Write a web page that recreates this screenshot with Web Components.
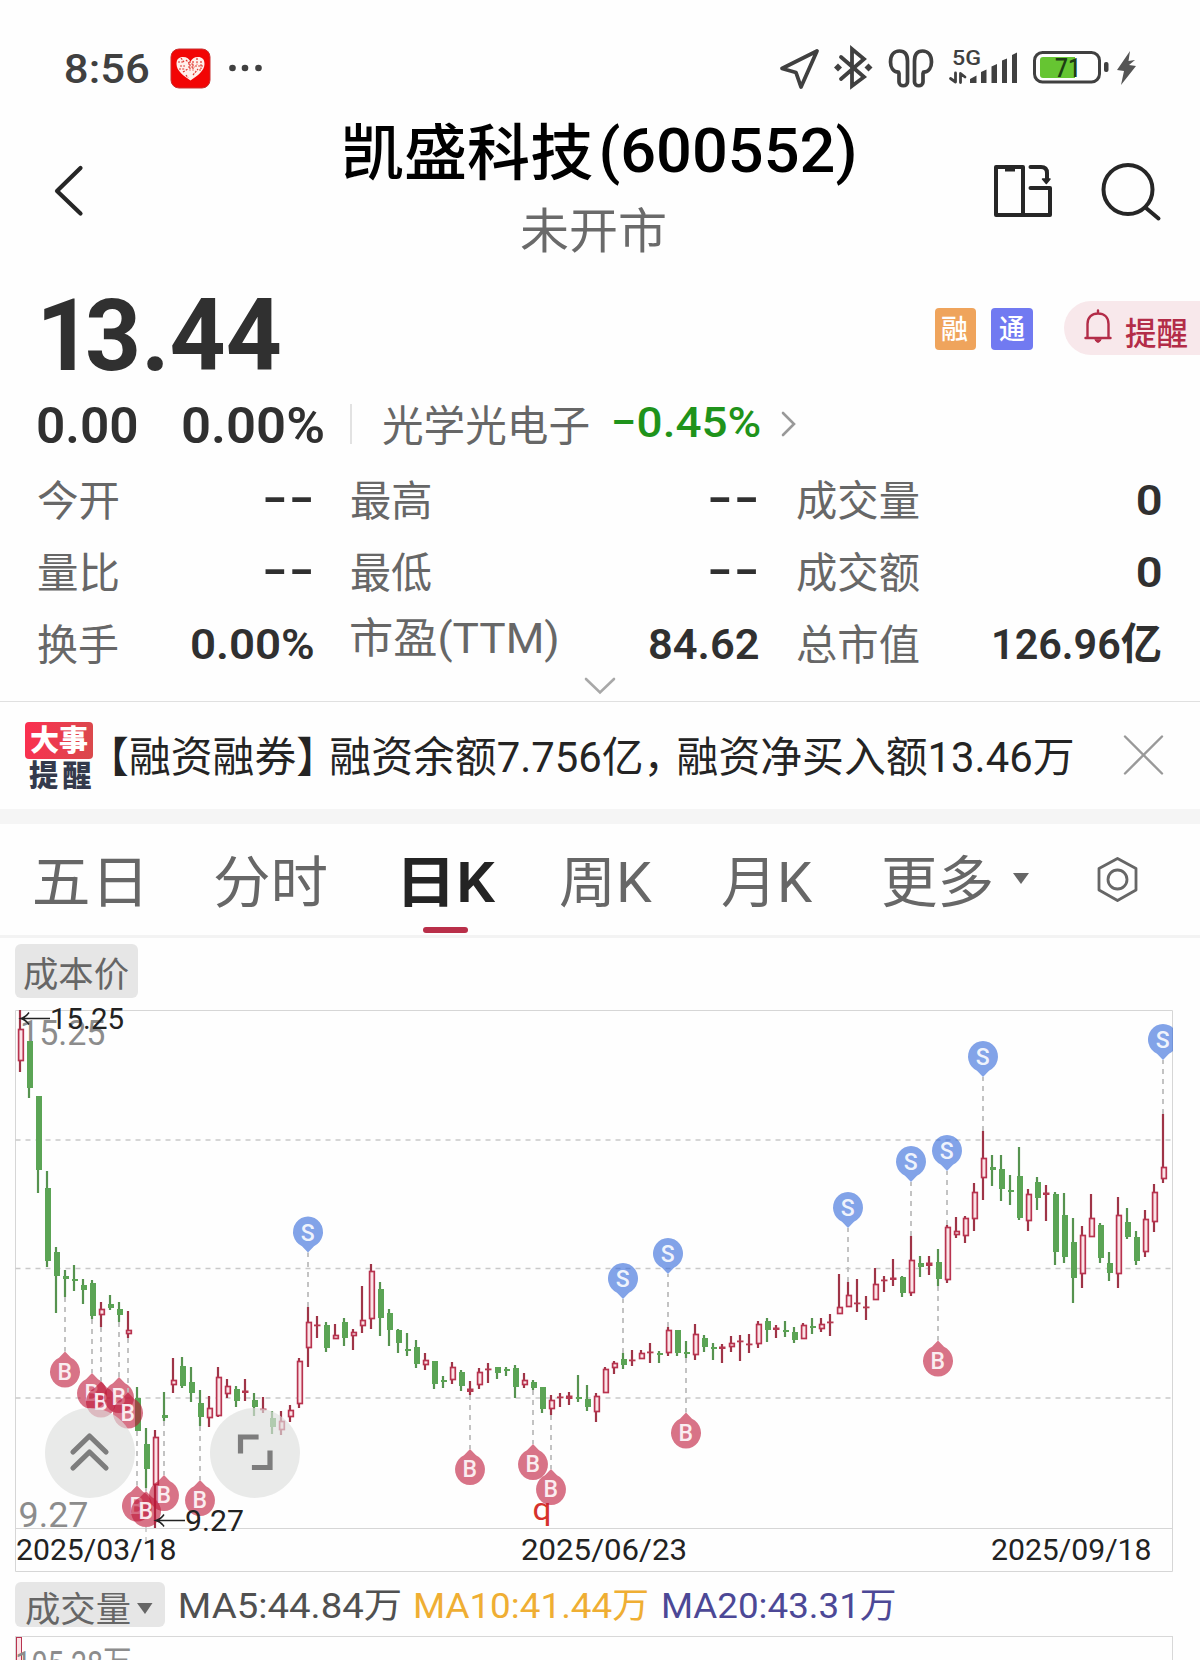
<!DOCTYPE html>
<html lang="zh-CN">
<head>
<meta charset="utf-8">
<title>凯盛科技(600552)</title>
<style>
  html, body { margin: 0; padding: 0; }
  body {
    width: 1200px;
    height: 1660px;
    overflow: hidden;
    background: #fefefe;
    font-family: Roboto, "Noto Sans CJK SC", sans-serif;
  }
</style>
</head>
<body>
<stock-page></stock-page>

<script>
const FONT = 'Roboto, "Noto Sans CJK SC", sans-serif';

function define(name, html, setup) {
  const template = document.createElement('template');
  template.innerHTML = html;
  customElements.define(name, class extends HTMLElement {
    constructor() {
      super();
      this.attachShadow({ mode: 'open' });
      this.shadowRoot.appendChild(template.content.cloneNode(true));
      if (setup) setup(this.shadowRoot, this);
    }
  });
}

// Custom Element: <ink-text>
// One line of text whose visible glyphs fill exactly `w` pixels.
class InkText extends HTMLElement {
  constructor() {
    super();
    this.attachShadow({ mode: 'open' });
    this.shadowRoot.innerHTML = `
      <style>
        :host { display: block; flex: none; white-space: nowrap; line-height: 1; }
        span { display: inline-block; transform-origin: 0 50%; vertical-align: top; }
      </style>
      <span><slot></slot></span>
    `;
  }

  connectedCallback() {
    const size = Number(this.getAttribute('size'));
    const weight = this.getAttribute('weight') || '400';
    const width = Number(this.getAttribute('w'));
    const span = this.shadowRoot.querySelector('span');
    this.style.fontSize = size + 'px';
    this.style.height = size + 'px';
    this.style.fontWeight = weight;
    this.style.width = width + 'px';
    const ctx = document.createElement('canvas').getContext('2d');
    ctx.font = `${weight} ${size}px ${FONT}`;
    const m = ctx.measureText(this.textContent);
    const left = -m.actualBoundingBoxLeft;
    const right = m.width - m.actualBoundingBoxRight;
    const scale = width / (span.getBoundingClientRect().width - left - right);
    span.style.transform = `translateX(${-left * scale}px) scaleX(${scale})`;
  }
}
customElements.define('ink-text', InkText);

// Custom Element: <status-bar>
define('status-bar', `
  <style>
    :host { display: flex; height: 104px; box-sizing: border-box; color: #404040; align-items: flex-start; padding-left: 66px; }
    .time { margin-top: 49.5px; }
    .app { margin: 48px 0 0 21px; }
    .icons { margin: 40px 0 0 auto; }
    svg { display: block; }
  </style>
  <ink-text class="time" w="83" size="40" weight="500">8:56</ink-text>
  <svg class="app" width="100" height="42" viewBox="170 48 100 42">
    <rect x="171" y="49" width="39" height="39" rx="8" fill="#f20505" stroke="#c93030"/>
    <path d="M190.500 80.500C184 76 176.500 71 176.500 64C176.500 59 179 57 183 57C187 57 189 59 190.500 61.500C192 59 194 57 198 57C202 57 204.500 59 204.500 64C204.500 71 197 76 190.500 80.500Z" fill="#fff0ec"/>
    <path d="M178 62h6M180 66h5M188 64h6M188 67h7M190 61v10M193 61v10M197 58v7M201 61v8M183 72l5-3M193 75l5-6M181 58l3 4M186 75l2 3M199 70h3M179 69h6M195 66h8M186 60l3 3" stroke="#e0362f" stroke-width="1.200" stroke-dasharray="2 1.200"/>
    <g fill="#404040"><circle cx="232.500" cy="68" r="3.300"/><circle cx="245" cy="68" r="3.300"/><circle cx="258.500" cy="68" r="3.300"/></g>
  </svg>
  <svg class="icons" width="430" height="60" viewBox="770 40 430 60" fill="none" stroke="#404040" stroke-linejoin="round" stroke-linecap="round">
    <path d="M817 51L782 68.500L796 72.500L801 87Z" stroke-width="3.800"/>
    <path d="M841 57L864 77L852 86V49L864 59L841 79" stroke-width="3.800" stroke-linejoin="miter"/>
    <g fill="#404040" stroke="none"><path d="M838 63.500l4 4-4 4-4-4zM868.500 63.500l4 4-4 4-4-4z"/></g>
    <path d="M898.500 72C893 72 890.500 67 890.500 62C890.500 55 894 51 899.500 51C905 51 907.500 54 907.500 61V82C907.500 87 899 87 899 82V73.500ZM923.500 72C929 72 931.500 67 931.500 62C931.500 55 928 51 922.500 51C917 51 914.500 54 914.500 61V82C914.500 87 923 87 923 82V73.500Z" stroke-width="3.700"/>
    <text x="952" y="65" font-size="20" font-weight="500" fill="#404040" stroke="none" font-family="Roboto" textLength="29" lengthAdjust="spacingAndGlyphs">5G</text>
    <path d="M955.500 73V82L950.500 78.500M960.500 82.500V73.500L965 77" stroke-width="2.800"/>
    <g fill="#404040" stroke="none">
      <path d="M970 83V79L976.500 75.500V83ZM981 83V72L986.500 69.500V83ZM991.500 83V66.500L997 64V83ZM1002 83V60.500L1007 58.500V83ZM1012 83V55L1017 52.500V83Z"/>
      <rect x="1104" y="62" width="4.500" height="10" rx="2"/>
      <path d="M1130 51L1117 70L1124 71L1121 85L1136 66L1129 65L1135 60L1128.500 61Z" fill="#555"/>
    </g>
    <rect x="1034.500" y="52.500" width="65" height="29.500" rx="8" stroke-width="3"/>
    <path d="M1043 57H1075V78H1043Q1040 78 1040 75V60Q1040 57 1043 57Z" fill="#66c532" stroke="none"/>
    <text x="1055" y="77" font-size="25" font-weight="500" fill="#1d3d14" stroke="none" font-family="Roboto" textLength="26" lengthAdjust="spacingAndGlyphs">71</text>
  </svg>
`);

// Custom Element: <stock-header>
define('stock-header', `
  <style>
    :host { display: flex; height: 166px; align-items: flex-start; }
    svg { display: block; flex: none; }
    .back { margin: 60px 0 0 50px; }
    .names { margin: 17px 0 0 255px; width: 509px; }
    .names ink-text + ink-text { margin: 26px 0 0 175.500px; color: #6a6a6a; }
    .cn { vertical-align: -3px; margin-right: 5px; }
    .tools { margin: 56px 0 0 131px; }
  </style>
  <svg class="back" width="40" height="56" viewBox="50 164 40 56" fill="none" stroke="#262626" stroke-width="4.200" stroke-linecap="round" stroke-linejoin="round">
    <path d="M80.500 168L57 191L80.500 213.500"/>
  </svg>
  <div class="names">
    <ink-text w="509" size="61" weight="500"><span class="cn">凯盛科技</span>(600552)</ink-text>
    <ink-text w="144" size="48">未开市</ink-text>
  </div>
  <svg class="tools" width="180" height="64" viewBox="985 160 180 64" fill="none" stroke="#262626" stroke-width="4" stroke-linecap="round" stroke-linejoin="round">
    <path d="M996 167H1023V215H996ZM1023 215H1050V188H1030.500M1030.500 167H1041Q1047 167 1047 173V179"/>
    <path d="M1005 169H1015" stroke-width="5" stroke-linecap="butt"/>
    <path d="M1042.500 179H1050L1046.300 183.500Z" fill="#262626" stroke-width="1.500"/>
    <circle cx="1128" cy="189.500" r="24.500"/>
    <path d="M1146 208L1158.500 218.500"/>
  </svg>
`);

// Custom Element: <quote-cell>
define('quote-cell', `
  <style>
    :host { display: flex; justify-content: space-between; align-items: flex-start; color: #303030; }
    ::slotted([slot=label]) { color: #676767; margin-top: 2px; }
  </style>
  <slot name="label"></slot><slot></slot>
`);

// Custom Element: <quote-panel>
define('quote-panel', `
  <style>
    :host { display: block; height: 431px; box-sizing: border-box; padding-top: 15px; color: #303030; overflow: hidden; }
    svg { display: block; flex: none; }
    .row { display: flex; align-items: flex-start; }
    .price { height: 101px; padding-left: 43.500px; }
    .one { letter-spacing: -.075em; }
    .tag { width: 42px; height: 42px; border-radius: 4px; margin-top: 23px; display: flex; justify-content: center; align-items: center; color: #fff; }
    .tag ink-text { margin-top: 2px; }
    .rong { background: #efa45c; margin-left: 655px; }
    .tong { background: #717af1; margin-left: 15px; }
    .remind { margin: 16px 0 0 31px; width: 136px; height: 54px; border-radius: 27px 0 0 27px; background: #f8e8eb; display: flex; color: #b32c48; }
    .remind svg { margin: 7px 0 0 19px; }
    .remind ink-text { margin: 17px 0 0 12px; }
    .change { height: 50px; margin-top: 15px; padding-left: 38px; }
    .bar { width: 2px; height: 40px; margin: 3px 0 0 27px; background: #e2e2e2; }
    .sector { margin: 5px 0 0 30.500px; color: #676767; }
    .down { margin: 0 0 0 25.500px; color: #1f931b; }
    .arrow { margin: 9px 0 0 19px; }
    .grid { display: grid; margin-top: 28px; padding-left: 37.500px; grid-template-columns: 275px 407px 364px; column-gap: 38.500px; grid-template-rows: 72px 72px 54px; }
    .dash { margin: -2px 1px 0 0; }
    .more { margin: 0 auto; }
  </style>
  <div class="row price">
    <ink-text w="236" size="101" weight="700"><span class="one">1</span>3.44</ink-text>
    <div class="tag rong"><ink-text w="26" size="27" weight="500">融</ink-text></div>
    <div class="tag tong"><ink-text w="26" size="27" weight="500">通</ink-text></div>
    <div class="remind">
      <svg width="30" height="38" viewBox="0 0 30 38" fill="none" stroke="#b32c48" stroke-width="2.400" stroke-linecap="round">
        <path d="M15 2.500V5M4.500 30V16C4.500 9 9 5.500 15 5.500S25.500 9 25.500 16V30M2.500 30H27.500"/>
        <path d="M12 32Q15 37 18 32Z" fill="#b32c48" stroke-width="1"/>
      </svg>
      <ink-text w="62" size="32" weight="500">提醒</ink-text>
    </div>
  </div>
  <div class="row change">
    <ink-text w="99" size="50" weight="600">0.00</ink-text>
    <ink-text style="margin-left:46px" w="140" size="50" weight="600">0.00%</ink-text>
    <div class="bar"></div>
    <ink-text class="sector" w="206" size="42">光学光电子</ink-text>
    <ink-text class="down" w="145.500" size="43" weight="500">−0.45%</ink-text>
    <svg class="arrow" width="18" height="28" viewBox="0 0 18 28" fill="none" stroke="#999" stroke-width="2.600" stroke-linecap="round"><path d="M4 3L15 14L4 25"/></svg>
  </div>
  <div class="grid">
    <quote-cell><ink-text slot="label" w="80" size="42">今开</ink-text><ink-text class="dash" w="47" size="43" weight="700">--</ink-text></quote-cell>
    <quote-cell><ink-text slot="label" w="79.500" size="42">最高</ink-text><ink-text class="dash" w="47" size="43" weight="700">--</ink-text></quote-cell>
    <quote-cell><ink-text slot="label" w="122" size="42">成交量</ink-text><ink-text w="23" size="43" weight="600">0</ink-text></quote-cell>
    <quote-cell><ink-text slot="label" w="80" size="42">量比</ink-text><ink-text class="dash" w="47" size="43" weight="700">--</ink-text></quote-cell>
    <quote-cell><ink-text slot="label" w="80" size="42">最低</ink-text><ink-text class="dash" w="47" size="43" weight="700">--</ink-text></quote-cell>
    <quote-cell><ink-text slot="label" w="122" size="42">成交额</ink-text><ink-text w="23" size="43" weight="600">0</ink-text></quote-cell>
    <quote-cell><ink-text slot="label" w="80" size="42">换手</ink-text><ink-text w="121" size="43" weight="600">0.00%</ink-text></quote-cell>
    <quote-cell><ink-text slot="label" style="margin-top:-5px" w="206" size="42">市盈(TTM)</ink-text><ink-text w="108" size="43" weight="600">84.62</ink-text></quote-cell>
    <quote-cell><ink-text slot="label" w="122" size="42">总市值</ink-text><ink-text w="167" size="43" weight="600">126.96亿</ink-text></quote-cell>
  </div>
  <svg class="more" width="36" height="20" viewBox="0 0 36 20" fill="none" stroke="#a8a8a8" stroke-width="2.600" stroke-linecap="round"><path d="M4 2L18 15.500L32 2"/></svg>
`);

// Custom Element: <news-bar>
define('news-bar', `
  <style>
    :host { display: flex; align-items: flex-start; height: 123px; box-sizing: border-box; border-top: 1px solid #e0e0e0; border-bottom: 15px solid #f5f5f5; color: #242424; }
    .logo { margin: 20px 0 0 25px; width: 68px; }
    .hot { height: 37px; border-radius: 4px; background: linear-gradient(100deg, #fb2f50, #d94a4c); color: #fff; display: flex; justify-content: center; align-items: center; }
    .hot ink-text { margin-top: 1px; }
    .logo > ink-text { margin: 2px 0 0 3.500px; color: #343a4c; }
    .text { margin: 35px 0 0 20.500px; }
    i { font-style: normal; letter-spacing: -.21em; }
    b { font-weight: inherit; letter-spacing: .14em; }
    svg { display: block; margin: 32px 0 0 50px; }
  </style>
  <div class="logo">
    <div class="hot"><ink-text w="58" size="29" weight="900">大事</ink-text></div>
    <ink-text w="62.500" size="30" weight="900"><b>提</b>醒</ink-text>
  </div>
  <ink-text class="text" w="958.500" size="42">【融资融券<i>】</i>融资余额7.756亿<i>，</i>融资净买入额13.46万</ink-text>
  <svg width="44" height="42" viewBox="0 0 44 42" stroke="#999" stroke-width="2.400" stroke-linecap="round"><path d="M3 2.500L40 39.500M40 2.500L3 39.500"/></svg>
`);

// Custom Element: <period-tabs>
define('period-tabs', `
  <style>
    :host { display: flex; align-items: flex-start; height: 114px; box-sizing: border-box; padding: 31px 0 0 34.500px; border-bottom: 3px solid #f3f3f3; color: #676767; }
    .on { color: #242424; width: 91px; }
    .on::after { content: ""; display: block; width: 45px; height: 6px; margin: 16px 0 0 19.500px; border-radius: 3px; background: #b92f49; }
    svg { display: block; }
  </style>
  <ink-text w="105" size="56">五日</ink-text>
  <ink-text style="margin-left:75px" w="111" size="56">分时</ink-text>
  <div class="on" style="margin-left:78px"><ink-text w="91.500" size="56" weight="600">日K</ink-text></div>
  <ink-text style="margin-left:65px" w="92.500" size="56">周K</ink-text>
  <ink-text style="margin-left:70px" w="91" size="56">月K</ink-text>
  <ink-text style="margin-left:69.500px" w="108" size="56">更多</ink-text>
  <svg style="margin:18px 0 0 22px" width="16" height="11" viewBox="0 0 16 11"><path d="M0 0H16L8 11Z" fill="#666"/></svg>
  <svg style="margin:0 0 0 67px" width="44" height="48" viewBox="1096 855 44 48" fill="none" stroke="#666" stroke-width="2.800" stroke-linejoin="round"><path d="M1117.500 858.500L1136 868.500V890L1117.500 900.500L1099 890V868.500Z"/><circle cx="1117.500" cy="879.500" r="9.500"/></svg>
`);

// Each candle: kind (1 = up, 0 = down), high, body top, body bottom, low
const CANDLES = [
  [1,1010,1029,1061,1072],[0,1041,1041,1088,1098],[0,1096,1096,1170,1193],[0,1171,1188,1261,1267],
  [0,1247,1252,1276,1313],[0,1270,1276,1279,1297],[0,1265,1279,1281,1291],[0,1279,1285,1290,1304],
  [0,1280,1283,1316,1319],[1,1302,1309,1315,1327],[0,1295,1304,1308,1310],[0,1302,1309,1315,1322],
  [1,1311,1330,1334,1338],[0,1387,1398,1431,1431],[0,1428,1444,1469,1488],[1,1430,1437,1485,1528],
  [0,1392,1415,1418,1421],[1,1358,1380,1385,1393],[0,1357,1366,1386,1388],[0,1367,1382,1393,1402],
  [0,1390,1403,1417,1426],[1,1396,1408,1418,1427],[1,1367,1377,1416,1417],[1,1379,1386,1394,1398],
  [0,1386,1389,1401,1407],[1,1379,1391,1393,1401],[0,1393,1400,1407,1416],[1,1397,1409,1410,1413],
  [0,1411,1418,1427,1434],[1,1411,1421,1430,1435],[1,1405,1410,1417,1422],[1,1358,1361,1404,1408],
  [1,1307,1322,1348,1367],[1,1316,1325,1326,1338],[0,1322,1325,1348,1352],[1,1324,1335,1339,1339],
  [0,1318,1322,1338,1346],[1,1329,1332,1336,1350],[1,1286,1320,1326,1333],[1,1264,1271,1319,1329],
  [0,1282,1289,1318,1336],[0,1309,1313,1330,1346],[0,1329,1330,1343,1353],[0,1333,1349,1351,1356],
  [0,1340,1347,1364,1368],[1,1353,1360,1365,1370],[0,1361,1361,1384,1389],[0,1376,1380,1382,1388],
  [1,1362,1367,1380,1384],[0,1370,1372,1386,1391],[1,1381,1389,1392,1395],[1,1368,1372,1385,1389],
  [1,1363,1369,1370,1383],[0,1367,1367,1373,1379],[0,1367,1369,1371,1376],[0,1365,1368,1387,1398],
  [1,1373,1380,1385,1388],[0,1380,1382,1388,1390],[0,1387,1387,1409,1413],[1,1395,1400,1409,1415],
  [1,1393,1397,1398,1407],[1,1392,1396,1399,1405],[0,1375,1397,1399,1402],[0,1385,1399,1407,1411],
  [1,1393,1396,1412,1422],[1,1367,1369,1393,1393],[1,1361,1363,1368,1374],[0,1353,1359,1365,1369],
  [1,1350,1360,1361,1366],[1,1350,1353,1359,1359],[1,1343,1352,1353,1363],[0,1351,1353,1354,1363],
  [1,1327,1330,1353,1356],[0,1330,1330,1353,1356],[0,1341,1352,1354,1358],[1,1324,1334,1355,1360],
  [0,1335,1338,1347,1352],[0,1343,1347,1349,1360],[1,1344,1347,1349,1363],[1,1336,1343,1347,1352],
  [1,1335,1341,1342,1361],[1,1334,1344,1345,1353],[1,1321,1324,1344,1348],[0,1318,1321,1330,1342],
  [1,1325,1328,1330,1338],[0,1321,1330,1331,1337],[0,1327,1332,1340,1343],[1,1323,1325,1339,1339],
  [0,1318,1326,1328,1334],[1,1318,1324,1329,1332],[1,1314,1322,1323,1336],[1,1274,1307,1314,1314],
  [1,1282,1295,1307,1307],[1,1279,1303,1304,1312],[1,1296,1307,1308,1320],[1,1268,1284,1300,1300],
  [1,1276,1280,1281,1292],[1,1259,1278,1280,1286],[0,1276,1277,1293,1297],[1,1236,1260,1293,1296],
  [0,1256,1263,1267,1277],[1,1256,1263,1266,1275],[0,1249,1262,1279,1286],[1,1225,1227,1280,1283],
  [1,1217,1231,1235,1238],[1,1216,1218,1236,1243],[1,1183,1192,1219,1231],[1,1131,1158,1178,1200],
  [0,1155,1167,1170,1186],[0,1155,1169,1189,1201],[0,1175,1190,1192,1205],[0,1147,1176,1218,1220],
  [1,1189,1194,1221,1231],[0,1177,1182,1198,1210],[1,1185,1193,1195,1221],[0,1192,1194,1252,1265],
  [0,1193,1215,1257,1263],[0,1218,1242,1278,1303],[1,1226,1235,1274,1288],[1,1194,1218,1237,1237],
  [0,1223,1225,1258,1263],[0,1252,1263,1273,1281],[1,1197,1215,1274,1288],[0,1208,1222,1237,1239],
  [0,1231,1237,1261,1265],[1,1210,1219,1252,1257],[1,1184,1192,1222,1232],[1,1114,1167,1179,1183]
];

// Trade marks: candle index, centre of the bubble
const SELLS = [[32,1232.5],[67,1279],[72,1254],[92,1208],[99,1162],[103,1151],[107,1057],[127,1040]];
const BUYS = [[5,1371.5],[8,1393],[9,1401.5],[11,1397],[12,1412.5],[13,1505.5],[14,1511],[16,1495],[20,1500],[50,1469],[57,1464],[59,1489],[74,1432.5],[102,1360.5]];

function candleX(i) {
  return 20 + 9 * i;
}

function drawCandle([up, high, top, bottom, low], i) {
  const x = candleX(i);
  if (!up) {
    return `<path d="M${x} ${high}V${low}" stroke="#56934f" stroke-width="2.200"/>
      <rect x="${x - 2}" y="${top}" width="6" height="${Math.max(2, bottom - top)}" fill="#5ba455"/>`;
  }
  const wick = `<path d="M${x} ${high}V${top}M${x} ${bottom}V${low}" stroke="#9f3447" stroke-width="2.200"/>`;
  if (bottom - top < 4) {
    return wick + `<rect x="${x - 3}" y="${top - .5}" width="6.5" height="${Math.max(1.8, bottom - top + .5)}" fill="#b53850"/>`;
  }
  return wick + `<rect x="${x - 1.4}" y="${top + .5}" width="4.700" height="${bottom - top - 1}" fill="#fbe3e7" stroke="#b8334f" stroke-width="1.700"/>`;
}

function drawMark(letter, i, cy) {
  const x = candleX(i);
  const sell = letter === 'S';
  const dir = sell ? 1 : -1;
  const tip = cy + 20 * dir;
  const end = sell ? CANDLES[i][1] : CANDLES[i][4];
  return `<path d="M${x} ${end}V${tip}" stroke="#bdbdbd" stroke-width="1.800" stroke-dasharray="5 5"/>
    <path d="M${x - 6} ${cy + 13.75 * dir}A15 15.500 0 1 ${sell ? 1 : 0} ${x + 6} ${cy + 13.75 * dir}L${x} ${tip}Z" fill="${sell ? 'rgba(47,102,217,.6)' : 'rgba(190,22,55,.6)'}"/>
    <text x="${x - .3}" y="${cy + 8}" font-size="23" font-weight="500" text-anchor="middle" fill="#fff" fill-opacity=".88">${letter}</text>`;
}

// Custom Element: <k-chart>
define('k-chart', `
  <style>
    :host { display: flow-root; height: 636px; }
    .chip { display: flex; width: 123px; height: 54px; margin: 6px 0 0 15px; border-radius: 6px; background: #e6e6e6; color: #666; }
    .chip ink-text { margin: 13.500px 0 0 9px; }
    svg { display: block; margin-top: 2px; }
  </style>
  <div class="chip"><ink-text w="104" size="35">成本价</ink-text></div>
  <svg width="1200" height="574" viewBox="0 1000 1200 574" font-family="Roboto">
    <defs><clipPath id="plot"><rect x="15" y="1000" width="1158" height="574"/></clipPath></defs>
    <g fill="none" stroke="#d6d6d6" stroke-width="1">
      <path d="M15.500 1010.500H1172.500V1571.500H15.500ZM15.500 1528.500H1172.500"/>
      <path d="M15.500 1140H1172M15.500 1268.500H1172M15.500 1398H1172" stroke="#c9c9c9" stroke-width="1.600" stroke-dasharray="5 5"/>
      <path d="M146 1527V1541" stroke="#c9c9c9" stroke-width="1.600" stroke-dasharray="5 5"/>
    </g>
    <g fill="#8c8c8c" font-size="35">
      <text x="20" y="1044.500" textLength="85.500" lengthAdjust="spacingAndGlyphs">15.25</text>
      <text x="18.500" y="1526.500" textLength="70" lengthAdjust="spacingAndGlyphs">9.27</text>
    </g>
    <text x="532.500" y="1520" font-size="31" fill="#d6322c" textLength="19" lengthAdjust="spacingAndGlyphs">q</text>
    <g id="candles" clip-path="url(#plot)"></g>
    <g fill="#222" font-size="30">
      <text x="50" y="1029" textLength="74" lengthAdjust="spacingAndGlyphs" font-size="29.500">15.25</text>
      <text x="185" y="1530.500" textLength="59" lengthAdjust="spacingAndGlyphs" font-size="29.500">9.27</text>
      <text x="16" y="1560" textLength="160.500" lengthAdjust="spacingAndGlyphs">2025/03/18</text>
      <text x="521" y="1560" textLength="166" lengthAdjust="spacingAndGlyphs">2025/06/23</text>
      <text x="991" y="1560" textLength="160.500" lengthAdjust="spacingAndGlyphs">2025/09/18</text>
    </g>
    <path d="M50 1018.500H22M29 1012.500Q26 1017 21 1018.500Q26 1020 29 1024.500M185 1520.500H157M164 1514.500Q161 1519 156 1520.500Q161 1522 164 1526.500" fill="none" stroke="#222" stroke-width="1.500"/>
    <g fill="rgba(222,223,222,.66)"><circle cx="90" cy="1453" r="45"/><circle cx="255" cy="1453" r="45"/></g>
    <g fill="none" stroke="#7d7d7d" stroke-width="5.200" stroke-linecap="round" stroke-linejoin="round">
      <path d="M73 1452L89.500 1436L106 1452M73 1468L89.500 1452L106 1468"/>
      <path d="M240.500 1451V1437H256M254.500 1467.500H270V1453" stroke-linejoin="miter" stroke-linecap="square"/>
    </g>
  </svg>
`, (root) => {
  const parts = CANDLES.map(drawCandle);
  SELLS.forEach(([i, y]) => parts.push(drawMark('S', i, y)));
  BUYS.forEach(([i, y]) => parts.push(drawMark('B', i, y)));
  root.querySelector('#candles').innerHTML = parts.join('');
});

// Custom Element: <volume-panel>
define('volume-panel', `
  <style>
    :host { display: block; height: 86px; overflow: hidden; }
    .head { display: flex; align-items: flex-start; height: 54px; }
    .chip { display: flex; width: 150px; height: 45px; margin: 8px 0 0 15px; border-radius: 6px; background: #e6e6e6; color: #666; }
    .chip ink-text { margin: 10.500px 0 0 11px; }
    .chip svg { margin: 21px 0 0 7px; }
    .ma { margin: 15px 0 0 15px; }
    .plot { display: flex; width: 1156px; height: 60px; margin: 8px 0 0 15px; border: 1px solid #d8d8d8; color: #8c8c8c; }
    .plot ink-text { margin: 10px 0 0 -5px; }
    .vol { width: 4px; border: 1.500px solid #b8334f; background: #fbe3e7; }
  </style>
  <div class="head">
    <div class="chip"><ink-text w="104" size="35">成交量</ink-text><svg width="16" height="12" viewBox="0 0 16 12"><path d="M0 0H15.500L8 11Z" fill="#666"/></svg></div>
    <ink-text class="ma" style="color:#505050" w="220" size="35">MA5:44.84万</ink-text>
    <ink-text class="ma" style="color:#efae33" w="232" size="35">MA10:41.44万</ink-text>
    <ink-text class="ma" style="color:#4c4896;margin-left:16px" w="231.500" size="35">MA20:43.31万</ink-text>
  </div>
  <div class="plot"><div class="vol"></div><ink-text w="113" size="35">105.28万</ink-text></div>
`);

// Custom Element: <stock-page>
define('stock-page', `
  <style>
    :host { display: block; width: 1200px; height: 1660px; overflow: hidden; }
  </style>
  <status-bar></status-bar>
  <stock-header></stock-header>
  <quote-panel></quote-panel>
  <news-bar></news-bar>
  <period-tabs></period-tabs>
  <k-chart></k-chart>
  <volume-panel></volume-panel>
`);
</script>
</body>
</html>
